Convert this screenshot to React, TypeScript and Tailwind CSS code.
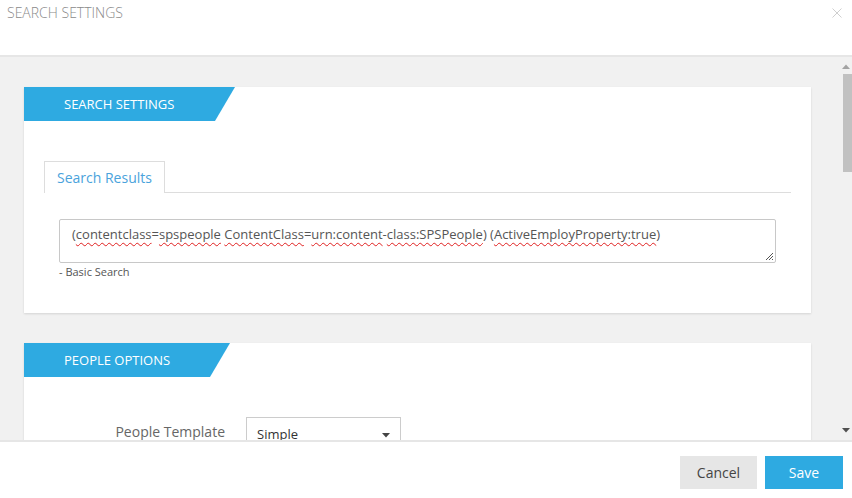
import React from "react";

const font = { fontFamily: '"Open Sans", "Noto Sans", sans-serif' };

function Wavy({ children }: { children: React.ReactNode }) {
  return (
    <span className="underline decoration-wavy decoration-[#e02020] decoration-1 underline-offset-[3px]">
      {children}
    </span>
  );
}

function Banner({ label, wide }: { label: string; wide: number }) {
  return (
    <div className="relative h-[34px]">
      <svg className="absolute left-0 top-0" width={wide} height={34} viewBox={`0 0 ${wide} 34`}>
        <polygon points={`0,0 ${wide},0 ${wide - 20},34 0,34`} fill="#2eaae1" />
      </svg>
      <div className="relative pl-[40px] pt-[1px] h-[34px] flex items-center text-[13px] text-white uppercase">{label}</div>
    </div>
  );
}

export default function App() {
  return (
    <div className="w-[852px] h-[498px] bg-white flex flex-col overflow-hidden" style={font}>
      {/* header */}
      <div className="h-[57px] shrink-0 flex justify-between items-start pl-[7px] pr-[9px] pt-[3px] border-b-2 border-[#e6e6e6]">
        <div className="text-[14px] text-[#8a8a8a] font-light leading-[19px] whitespace-nowrap">SEARCH SETTINGS</div>
        <svg width="10" height="10" viewBox="0 0 10 10" className="mt-[5px] mr-[1px]">
          <path d="M0.5 0.5 L9.5 9.5 M9.5 0.5 L0.5 9.5" stroke="#cfcfcf" strokeWidth="1" />
        </svg>
      </div>

      {/* body */}
      <div className="flex-1 flex bg-[#f1f1f1] min-h-0">
        <div className="flex-1 pl-[24px] pr-[27px] pt-[30px] flex flex-col gap-[30px] overflow-hidden">
          {/* card 1 */}
          <div className="bg-white shadow-[0_1px_2px_rgba(0,0,0,0.12)] h-[226px] shrink-0 flex flex-col">
            <Banner label="SEARCH SETTINGS" wide={211} />
            <div className="px-[20px] pt-[40px]">
              <div className="flex border-b border-[#dddddd]">
                <div className="h-[32px] px-[12px] border border-b-0 border-[#dddddd] bg-white -mb-px flex items-center text-[14px] text-[#4aa3dc]">
                  Search Results
                </div>
              </div>
            </div>
            <div className="px-[35px] pt-[26px]">
              <div className="relative h-[44px] border border-[#c8c8c8] rounded-[2px] px-[12px] pt-[5px] text-[13px] text-[#555] leading-[18px] whitespace-nowrap">
                (<Wavy>contentclass</Wavy>=<Wavy>spspeople</Wavy> <Wavy>ContentClass</Wavy>=<Wavy>urn:content</Wavy>-<Wavy>class:SPSPeople</Wavy>) (<Wavy>ActiveEmployProperty:true</Wavy>)
                <svg className="absolute right-[1px] bottom-[1px]" width="9" height="9" viewBox="0 0 9 9">
                  <path d="M8 1 L1 8 M8 4 L4 8 M8 7 L7 8" stroke="#555" strokeWidth="1" />
                </svg>
              </div>
              <div className="text-[11px] text-[#555] mt-[1px] leading-[15px]">- Basic Search</div>
            </div>
          </div>

          {/* card 2 */}
          <div className="bg-white shadow-[0_1px_2px_rgba(0,0,0,0.12)] h-[200px] shrink-0 flex flex-col">
            <Banner label="PEOPLE OPTIONS" wide={206} />
            <div className="pt-[40px] flex items-start">
              <div className="w-[201px] text-right text-[14px] text-[#666] pt-[5px] leading-[20px]">People Template</div>
              <div className="ml-[21px] w-[155px] h-[32px] border border-[#cccccc] flex items-center justify-between pl-[10px] pr-[10px] pt-[4px]">
                <span className="text-[13px] text-[#333]">Simple</span>
                <svg width="8" height="5" viewBox="0 0 8 5">
                  <polygon points="0,0 8,0 4,4.5" fill="#444" />
                </svg>
              </div>
            </div>
          </div>
        </div>

        {/* scrollbar */}
        <div className="w-[14px] shrink-0 flex flex-col items-end">
          <div className="h-[17px] w-full flex items-center justify-end pr-[2px] pt-[2px]">
            <svg width="8" height="5" viewBox="0 0 8 5">
              <polygon points="0,5 8,5 4,0.5" fill="#a3a3a3" />
            </svg>
          </div>
          <div className="w-[9px] h-[98px] bg-[#c1c1c1]" />
          <div className="flex-1" />
          <div className="h-[17px] w-full flex items-center justify-end pr-[2px] pb-[2px]">
            <svg width="8" height="5" viewBox="0 0 8 5">
              <polygon points="0,0 8,0 4,4.5" fill="#505050" />
            </svg>
          </div>
        </div>
      </div>

      {/* footer */}
      <div className="h-[58px] shrink-0 border-t-2 border-[#e6e6e6] flex items-start justify-end gap-[8px] pr-[9px] pt-[14px]">
        <button className="w-[77px] h-[33px] bg-[#e6e6e6] text-[14px] text-[#444]">Cancel</button>
        <button className="w-[78px] h-[33px] bg-[#2eaae1] text-[14px] text-white">Save</button>
      </div>
    </div>
  );
}
